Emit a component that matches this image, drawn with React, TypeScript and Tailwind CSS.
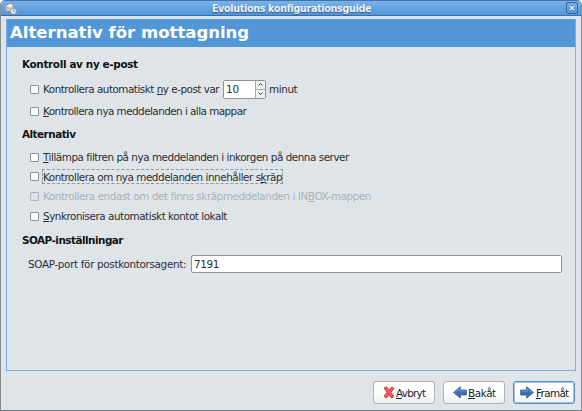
import type { ReactNode } from 'react';

function Heading({ children, className }: { children: ReactNode; className: string }) {
  return <h2 className={`ml-[15px] flex h-4 items-center font-bold text-[#101214] ${className}`}>{children}</h2>;
}

function Check({ children, className, disabled, focused }: { children: ReactNode; className: string; disabled?: boolean; focused?: boolean }) {
  return (
    <label className={`ml-[23px] flex items-center ${disabled ? 'text-[#a9b3ba]' : 'text-[#2b2e31]'} ${className}`}>
      <span className={`mr-[3px] size-[9px] shrink-0 rounded-[1px] border ${disabled ? 'border-[#a9b4bd] bg-[#dfe4e8]' : 'border-[#88929b] bg-white'}`} />
      <span className={`flex items-center border border-dashed ${focused ? 'h-[15px] w-[241px] border-[#92999e]' : 'border-transparent'}`}>
        <span>{children}</span>
      </span>
    </label>
  );
}

function Key({ children }: { children: ReactNode }) {
  return <span className="underline decoration-1 underline-offset-1">{children}</span>;
}

function Button({ icon, children, primary, className }: { icon: ReactNode; children: ReactNode; primary?: boolean; className: string }) {
  return (
    <button className={`flex h-[23px] w-[62px] items-center rounded-[3px] border bg-linear-to-b from-white from-50% to-[#eceef0] pl-[9px] text-[#202326] ${className} ${primary ? 'border-[#4e8cca] shadow-[inset_0_0_0_1px_#a5c9ed]' : 'border-[#adb3b9]'}`}>
      {icon}
      <span>{children}</span>
    </button>
  );
}

function Arrow({ flip }: { flip?: boolean }) {
  return (
    <svg className={`h-[13px] w-[14px] shrink-0 ${flip ? 'mr-[1px] -scale-x-100' : '-ml-[3px] mr-[2px]'}`} viewBox="0 0 14 13">
      <path d="M.7 4h6V.8l6.7 5.7L6.7 12V9h-6z" fill="#3b6fb4" stroke="#2c5591" strokeWidth=".8" strokeLinejoin="round" />
      <path d="M1.5 5h6V3l4 3.3" fill="none" stroke="#7da6d7" strokeWidth=".7" />
    </svg>
  );
}

export default function App() {
  return (
    <div className="flex h-[411px] w-[582px] flex-col overflow-hidden rounded-t-[5px] border border-t-0 border-[#858b90] border-b-[#737c83] bg-[#dfe4e8] font-['DejaVu_Sans',sans-serif] text-[10.4px] leading-[14px] text-[#2b2e31] whitespace-nowrap">
      <header className="flex h-4 shrink-0 items-center border-t border-b border-t-[#4573a2] border-b-[#3b6eaa] bg-linear-to-b from-[#79b2ea] to-[#5095d9] pr-[3px] pl-[3px]">
        <svg className="h-[13px] w-[13px] shrink-0" viewBox="0 0 12 12">
          <path d="M.8 4 5.8.7l3.3 2.6v4.8L2 9z" fill="#d8d5cb" stroke="#81847f" strokeWidth=".7" />
          <path d="m1 4 4.5 2L9 3.4M1.8 8.6 4 5.5" fill="none" stroke="#a3a198" strokeWidth=".8" />
          <path d="M3 3.5 6 2l2 1.5-2.5 1.7z" fill="#fff" />
          <circle cx="8.7" cy="8.6" r="2.7" fill="#f0f3f6" stroke="#8995a3" strokeWidth=".8" />
          <path d="M8.7 6.9v1.8H10" fill="none" stroke="#53677d" strokeWidth=".7" />
        </svg>
        <h1 className="flex-1 text-center text-[9.6px] leading-[13px] font-bold tracking-[-0.33px] text-[#edf3f9] [text-shadow:0_1px_1px_#32587f]">Evolutions konfigurationsguide</h1>
        <button className="flex h-3 w-3 items-center justify-center rounded-[2px] border border-[#37699f]">
          <svg className="h-[6px] w-[6px]" viewBox="0 0 6 6"><path d="m1 1 4 4m0-4L1 5" stroke="#315d8d" strokeWidth="2.2" /><path d="m1 1 4 4m0-4L1 5" stroke="#f5f8fb" strokeWidth="1.4" /></svg>
        </button>
      </header>
      <main className="mx-[5px] mt-[3px] flex h-[352px] shrink-0 flex-col border border-t-0 border-[#78aee5]">
        <div className="flex h-7 shrink-0 items-center bg-[#5397d7] pl-[3px] text-[16.5px] font-bold text-white"><span>Alternativ för mottagning</span></div>
        <Heading className="mt-[9px] tracking-[-0.33px]">Kontroll av ny e-post</Heading>
        <div className="mt-[6px] flex h-[22px] items-center">
          <Check className="w-[193px] tracking-[-0.49px]">Kontrollera automatiskt <Key>n</Key>y e-post var</Check>
          <div className="flex h-[19px] w-[43px] rounded-[2px] border border-[#8c949b] bg-white">
            <span className="flex w-[31px] items-center pl-[2px]">10</span>
            <span className="flex flex-1 flex-col border-l border-[#a3aab0] bg-[#f0f2f3]">
              <span className="flex flex-1 items-center justify-center border-b border-[#a3aab0]"><svg className="h-[3px] w-[5px]" viewBox="0 0 5 3"><path d="m.5 2.5 2-2 2 2" fill="none" stroke="#333" /></svg></span>
              <span className="flex flex-1 items-center justify-center"><svg className="h-[3px] w-[5px]" viewBox="0 0 5 3"><path d="m.5.5 2 2 2-2" fill="none" stroke="#333" /></svg></span>
            </span>
          </div>
          <span className="ml-[3px] tracking-[-0.4px]">minut</span>
        </div>
        <Check className="mt-[2px] h-[18px] tracking-[-0.54px]"><Key>K</Key>ontrollera nya meddelanden i alla mappar</Check>
        <Heading className="mt-[6px] tracking-[-0.5px]">Alternativ</Heading>
        <Check className="mt-[5px] h-5 tracking-[-0.46px]"><Key>T</Key>illämpa filtren på nya meddelanden i inkorgen på denna server</Check>
        <Check className="h-[19px] tracking-[-0.46px]" focused>Kontrollera om nya meddelanden innehåller s<Key>k</Key>räp</Check>
        <Check className="h-5 tracking-[-0.43px]" disabled>Kontrollera endast om det finns skräpmeddelanden i IN<Key>B</Key>OX-mappen</Check>
        <Check className="h-5 tracking-[-0.46px]"><Key>S</Key>ynkronisera automatiskt kontot lokalt</Check>
        <Heading className="mt-[6px] tracking-[-0.5px]">SOAP-inställningar</Heading>
        <div className="mt-[6px] ml-[21px] flex h-5 items-center">
          <span className="w-[163px] tracking-[-0.33px]">SOAP-port för postkontorsagent:</span>
          <span className="flex h-[18px] w-[371px] items-center rounded-[2px] border border-[#8c949b] bg-white pl-[2px] tracking-[-0.4px]">7191</span>
        </div>
      </main>
      <footer className="mt-[10px] flex justify-end gap-2 pr-[6px]">
        <Button className="tracking-[-0.75px]" icon={<svg className="mr-[1px] h-[13px] w-3 shrink-0" viewBox="0 0 12 13"><path d="m1 2 2.5-1.2L6 4l2.7-3L11 2.5 8 6.4l3 3.9-2.5 1.9L6 9l-2.7 3.1L1 10.4l2.9-4z" fill="#ee5757" stroke="#c62c32" strokeWidth=".8" strokeLinejoin="round" /></svg>}><Key>A</Key>vbryt</Button>
        <Button className="tracking-[-0.4px]" icon={<Arrow flip />}><Key>B</Key>akåt</Button>
        <Button className="tracking-[-0.65px]" primary icon={<Arrow />}><Key>F</Key>ramåt</Button>
      </footer>
    </div>
  );
}
